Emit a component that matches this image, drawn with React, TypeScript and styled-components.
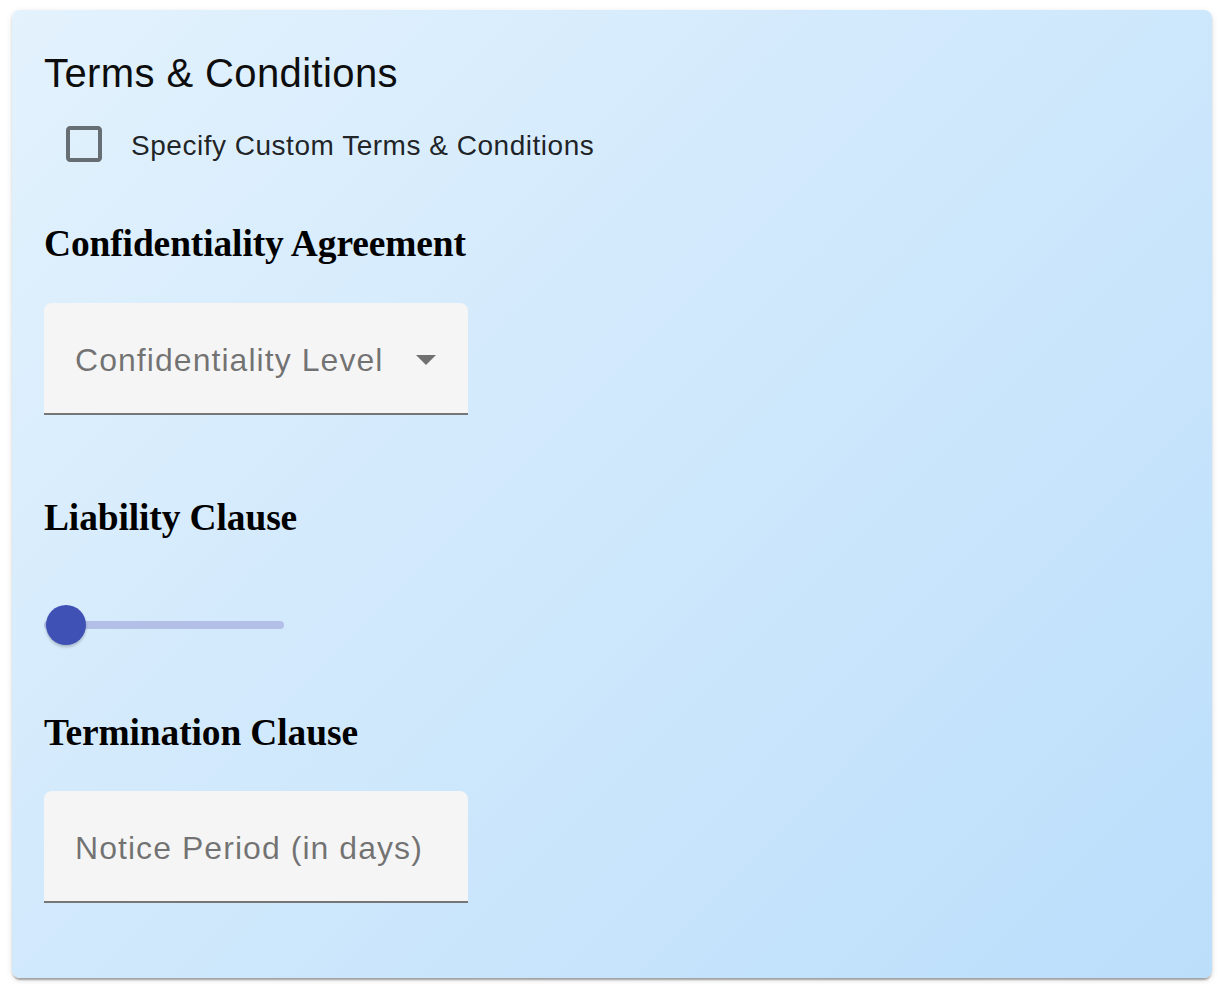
import { createGlobalStyle, styled } from 'styled-components'

const GlobalStyle = createGlobalStyle`
  *, *::before, *::after {
    box-sizing: border-box;
  }
  body {
    margin: 0;
    background: #ffffff;
  }
`

const Page = styled.div`
  padding: 10px 12px 6px;
`

const Card = styled.section`
  display: flex;
  flex-direction: column;
  align-items: flex-start;
  padding: 32px 32px 75px;
  border-radius: 8px;
  background: linear-gradient(135deg, #e3f2fd 0%, #bbdefb 100%);
  box-shadow: 0 4px 2px -2px rgba(0, 0, 0, 0.2), 0 2px 2px 0 rgba(0, 0, 0, 0.14),
    0 2px 6px 0 rgba(0, 0, 0, 0.12);
`

const Title = styled.h2`
  margin: 0;
  font-family: 'Liberation Sans', Arial, Helvetica, sans-serif;
  font-size: 40px;
  font-weight: 400;
  line-height: 62px;
  letter-spacing: 0.4px;
  color: #0d0d0d;
`

const CheckRow = styled.label`
  display: flex;
  align-items: center;
  height: 80px;
  cursor: pointer;
`

const CheckIcon = styled.svg`
  width: 48px;
  height: 48px;
  margin-left: 16px;
  fill: rgba(0, 0, 0, 0.54);
`

const CheckLabel = styled.span`
  margin: 4px 0 0 23px;
  font-family: 'Liberation Sans', Arial, Helvetica, sans-serif;
  font-size: 28px;
  letter-spacing: 0.52px;
  color: rgba(0, 0, 0, 0.87);
`

const SectionTitle = styled.h3<{ $above: number; $below: number }>`
  margin: ${p => p.$above}px 0 ${p => p.$below}px;
  font-family: 'Liberation Serif', 'Times New Roman', serif;
  font-size: 37.44px;
  font-weight: 700;
  line-height: 42px;
  letter-spacing: -0.1px;
  color: #000;
`

const FilledField = styled.div`
  display: flex;
  justify-content: space-between;
  align-items: flex-start;
  width: 424px;
  height: 112px;
  padding: 39px 32px 0 31px;
  background: #f5f5f5;
  border-radius: 8px 8px 0 0;
  border-bottom: 2px solid #767676;
`

const Placeholder = styled.span`
  font-family: 'Liberation Sans', Arial, Helvetica, sans-serif;
  font-size: 32px;
  line-height: 36px;
  letter-spacing: 1.05px;
  color: rgba(0, 0, 0, 0.54);
`

const Arrow = styled.svg`
  margin-top: 13px;
  fill: rgba(0, 0, 0, 0.54);
`

const Slider = styled.div`
  position: relative;
  width: 240px;
  height: 40px;
  margin-top: 66px;
  margin-bottom: 67px;
`

const Rail = styled.div`
  position: absolute;
  left: 0;
  right: 0;
  top: 16px;
  height: 8px;
  border-radius: 4px;
  background: #b3bfe7;
`

const Thumb = styled.div`
  position: absolute;
  left: 2px;
  top: 0;
  width: 40px;
  height: 40px;
  border-radius: 50%;
  background: #3f51b5;
  box-shadow: 0 2px 3px rgba(0, 0, 0, 0.22);
`

const App = () => {
  return (
    <Page>
      <GlobalStyle />
      <Card>
        <Title>Terms &amp; Conditions</Title>
        <CheckRow>
          <CheckIcon viewBox="0 0 24 24">
            <path d="M19 5v14H5V5h14m0-2H5c-1.11 0-2 .9-2 2v14c0 1.1.89 2 2 2h14c1.1 0 2-.9 2-2V5c0-1.1-.9-2-2-2z" />
          </CheckIcon>
          <CheckLabel>Specify Custom Terms &amp; Conditions</CheckLabel>
        </CheckRow>

        <SectionTitle $above={39} $below={38}>Confidentiality Agreement</SectionTitle>
        <FilledField>
          <Placeholder>Confidentiality Level</Placeholder>
          <Arrow width="20" height="10" viewBox="0 0 20 10">
            <polygon points="0,0 20,0 10,10" />
          </Arrow>
        </FilledField>

        <SectionTitle $above={82} $below={0}>Liability Clause</SectionTitle>
        <Slider>
          <Rail />
          <Thumb />
        </Slider>

        <SectionTitle $above={0} $below={37}>Termination Clause</SectionTitle>
        <FilledField>
          <Placeholder>Notice Period (in days)</Placeholder>
        </FilledField>
      </Card>
    </Page>
  )
}

export default App
